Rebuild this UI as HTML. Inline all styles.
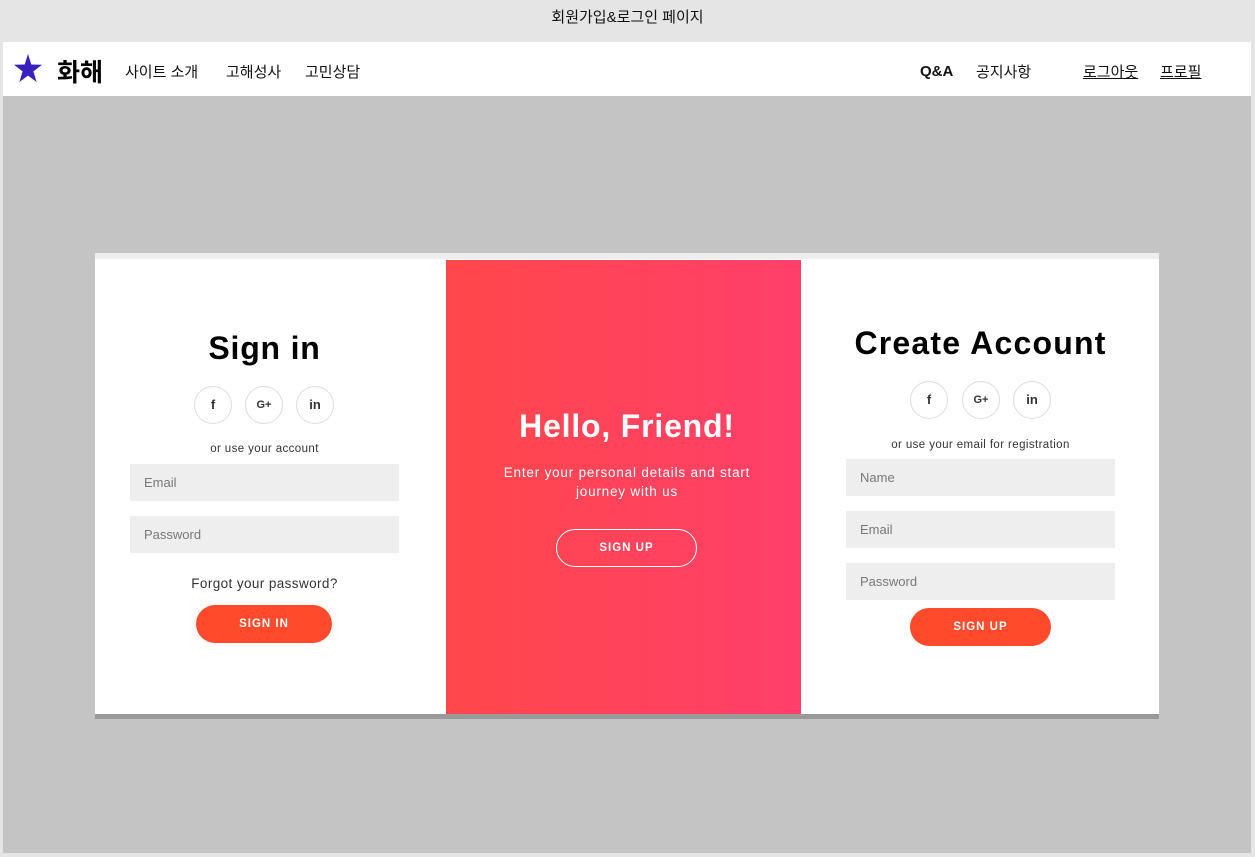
<!DOCTYPE html>
<html><head><meta charset="utf-8"><style>
*{margin:0;padding:0;box-sizing:border-box}
body{width:1255px;height:857px;background:#e5e5e5;font-family:"Liberation Sans","Noto Sans CJK KR",sans-serif;position:relative;overflow:hidden}
.a{position:absolute}
.title{left:0;width:1255px;top:6px;text-align:center;font-size:15px;color:#111}
.nav{left:3px;top:42px;width:1248px;height:54px;background:#fff}
.main{left:3px;top:96px;width:1248px;height:757px;background:#c4c4c4}
.nt{font-size:15px;color:#111;top:61px}
.card{left:95px;top:253px;width:1064px;height:461px;background:#fff;border-top:6px solid #eeeeef;box-shadow:0 5px 0 #9a9a9a}
.grad{left:446px;top:260px;width:355px;height:454px;background:linear-gradient(to right,#ff474b,#ff3f6a)}
h1{position:absolute;font-weight:bold;color:#000;text-align:center;font-size:32px;letter-spacing:0.8px}
.circ{position:absolute;width:38px;height:38px;border:1px solid #ddd;border-radius:50%;text-align:center;line-height:36px;font-size:13px;font-weight:bold;color:#333}
.sm{position:absolute;font-size:11.5px;color:#333;text-align:center;letter-spacing:0.4px}
.in{position:absolute;background:#eee;height:37px;width:269px;font-size:13px;color:#777;padding-left:14px;line-height:37px}
.btn{position:absolute;background:#ff4b2b;color:#fff;font-weight:bold;font-size:11.5px;letter-spacing:1px;text-align:center;border-radius:20px;height:38px;line-height:38px}
</style></head><body>
<div class="a title">회원가입&amp;로그인 페이지</div>
<div class="a nav"></div>
<div class="a main"></div>
<svg class="a" style="left:14px;top:54px" width="28" height="30" viewBox="0 0 28 30"><polygon points="14,0 17.3,10.5 28,10.8 19.4,17.4 22.6,28 14,21.6 5.4,28 8.6,17.4 0,10.8 10.7,10.5" fill="#3a1fbf"/></svg>
<div class="a" style="left:57px;top:53px;font-size:25px;font-weight:bold">화해</div>
<div class="a nt" style="left:125px">사이트 소개</div>
<div class="a nt" style="left:226px">고해성사</div>
<div class="a nt" style="left:305px">고민상담</div>
<div class="a nt" style="left:920px;font-weight:bold;top:63px">Q&amp;A</div>
<div class="a nt" style="left:976px">공지사항</div>
<div class="a nt" style="left:1083px;text-decoration:underline">로그아웃</div>
<div class="a nt" style="left:1160px;text-decoration:underline">프로필</div>

<div class="a card"></div>
<div class="a grad"></div>

<h1 style="left:110px;width:309px;top:330px">Sign in</h1>
<div class="circ" style="left:194px;top:386px">f</div>
<div class="circ" style="left:245px;top:386px;font-size:11px">G+</div>
<div class="circ" style="left:296px;top:386px">in</div>
<div class="sm" style="left:110px;width:309px;top:443px">or use your account</div>
<div class="in" style="left:130px;top:464px">Email</div>
<div class="in" style="left:130px;top:516px">Password</div>
<div class="a" style="left:110px;width:309px;top:576px;text-align:center;font-size:13.5px;color:#333;letter-spacing:0.4px">Forgot your password?</div>
<div class="btn" style="left:196px;top:605px;width:136px">SIGN IN</div>

<h1 style="left:426px;width:402px;top:408px;color:#fff">Hello, Friend!</h1>
<div class="a" style="left:426px;width:402px;top:463px;text-align:center;color:#fff;font-size:13.5px;line-height:19px;letter-spacing:0.8px">Enter your personal details and start<br>journey with us</div>
<div class="btn" style="left:556px;top:529px;width:141px;height:38px;line-height:36px;background:transparent;border:1px solid #fff">SIGN UP</div>

<h1 style="left:826px;width:309px;top:325px;letter-spacing:1.2px">Create Account</h1>
<div class="circ" style="left:910px;top:381px">f</div>
<div class="circ" style="left:962px;top:381px;font-size:11px">G+</div>
<div class="circ" style="left:1013px;top:381px">in</div>
<div class="sm" style="left:826px;width:309px;top:439px">or use your email for registration</div>
<div class="in" style="left:846px;top:459px">Name</div>
<div class="in" style="left:846px;top:511px">Email</div>
<div class="in" style="left:846px;top:563px">Password</div>
<div class="btn" style="left:910px;top:608px;width:141px">SIGN UP</div>
</body></html>
